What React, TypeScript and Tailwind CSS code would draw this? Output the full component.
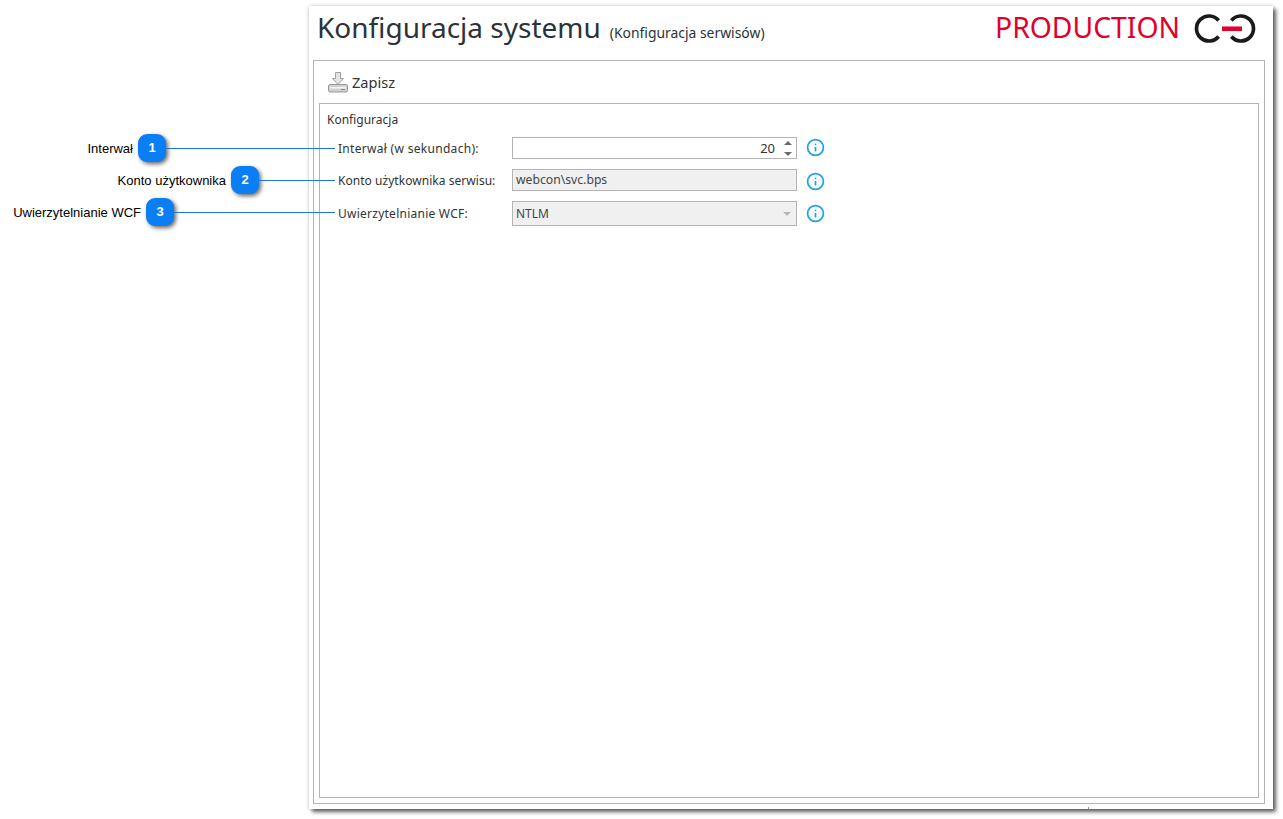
import { Info } from 'lucide-react'

const UI_FONT = "font-['Noto_Sans',sans-serif]"

// ---------------------------------------------------------------------------
// Callouts left of the window
// ---------------------------------------------------------------------------

const CALLOUTS = [
  { n: 1, label: 'Interwał', line: 'w-[169px]' },
  { n: 2, label: 'Konto użytkownika', line: 'w-[76px]' },
  { n: 3, label: 'Uwierzytelnianie WCF', line: 'w-[161px]' },
]

function Callouts() {
  return (
    <div className="absolute left-0 top-[134px] w-[335px] flex flex-col gap-[4px] font-['Liberation_Sans',sans-serif]">
      {CALLOUTS.map((c) => (
        <div key={c.n} className="h-[28px] flex items-center justify-end">
          <span className="text-[13px] text-black mr-[5px] pt-[1px]">{c.label}</span>
          <span className="w-[28px] h-[28px] shrink-0 rounded-[9px] bg-[#0a7ff5] text-white text-[13px] font-bold flex items-center justify-center shadow-[2px_2px_4px_rgba(0,0,0,0.6)]">
            {c.n}
          </span>
          <span className={`${c.line} h-px bg-[#1a78d8]`} />
        </div>
      ))}
    </div>
  )
}

// ---------------------------------------------------------------------------
// Icons
// ---------------------------------------------------------------------------

function Logo() {
  return (
    <svg width="66" height="31" viewBox="0 0 66 31" fill="none">
      <path d="M26.6 7.500A12.500 12.500 0 1 0 26.600 23.500" stroke="#1a1a1a" strokeWidth="3.7" />
      <path d="M39.400 7.500A12.500 12.500 0 1 1 39.400 23.500" stroke="#1a1a1a" strokeWidth="3.7" />
      <rect x="30" y="13.500" width="20" height="4.500" fill="#e4002b" />
    </svg>
  )
}

function SaveIcon() {
  return (
    <svg width="20" height="21" viewBox="0 0 20 21" fill="none">
      <path d="M7.5 .5h5v6h3l-5.5 6-5.500-6h3z" fill="#e4e4e4" stroke="#a0a0a0" />
      <rect x=".5" y="12.500" width="19" height="7.500" rx="1.500" fill="#d0d0d0" stroke="#999999" />
      <rect x="2" y="15" width="16" height="1.500" fill="#f4f4f4" />
      <rect x="13" y="17" width="4" height="1" fill="#8a8a8a" />
    </svg>
  )
}

function Spinner() {
  return (
    <div className="flex flex-col gap-[7px] mr-[4px]">
      <span className="w-0 h-0 border-x-[4px] border-x-transparent border-b-[4px] border-b-[#6a6a6a]" />
      <span className="w-0 h-0 border-x-[4px] border-x-transparent border-t-[4px] border-t-[#6a6a6a]" />
    </div>
  )
}

// ---------------------------------------------------------------------------
// Form rows
// ---------------------------------------------------------------------------

type RowProps = {
  label: string
  labelClass: string
  iconClass: string
  h: string
  mb: string
  children: React.ReactNode
}

function Row({ label, labelClass, iconClass, h, mb, children }: RowProps) {
  return (
    <div className={`flex items-center ${h} ${mb}`}>
      <label className={`w-[174px] shrink-0 text-[12px] text-[#333333] ${labelClass}`}>{label}</label>
      {children}
      <Info size={19} strokeWidth={2.2} className={`ml-[9px] text-[#1ea0f0] ${iconClass}`} />
    </div>
  )
}

export default function App() {
  return (
    <div className={`relative w-[1283px] h-[819px] overflow-hidden bg-white pl-[309px] pt-[6px] ${UI_FONT}`}>
      <div className="relative w-[964px] h-[803px] flex flex-col bg-white pl-[4px] pr-[8px] pb-[5px] shadow-[0_0_4px_rgba(0,0,0,0.2),3px_3px_4px_rgba(0,0,0,0.6)]">
        {/* Title bar */}
        <header className="h-[54px] shrink-0 flex items-center justify-between pl-[4px] pr-[7px] pb-[10px]">
          <div className="flex items-baseline gap-[9px] text-[#2b3338]">
            <h1 className="text-[28px] leading-none">Konfiguracja systemu</h1>
            <span className="text-[13.9px]">(Konfiguracja serwisów)</span>
          </div>
          <div className="flex items-center gap-[12px]">
            <span className="text-[28.3px] leading-none text-[#e4002b] mb-[1px]">PRODUCTION</span>
            <Logo />
          </div>
        </header>

        {/* Content */}
        <div className="flex-1 min-h-0 flex flex-col border border-[#b4b4b4] px-[5px] pb-[5px]">
          <div className="h-[42px] shrink-0 flex items-center pl-[9px] gap-[4px]">
            <SaveIcon />
            <span className="text-[14.6px] text-[#333333] pt-[2px]">Zapisz</span>
          </div>

          <section className="flex-1 min-h-0 border border-[#b4b4b4] pl-[7px] pt-[7px]">
            <div className="text-[12px] leading-[17px] text-[#333333] mb-[9px]">Konfiguracja</div>
            <div className="pl-[11px]">
              <Row
                label="Interwał (w sekundach):"
                labelClass="tracking-[0.3px] pt-[1px]"
                iconClass="-mt-[2px]"
                h="h-[22px]"
                mb="mb-[10px]"
              >
                <div className="w-[285px] h-full border border-[#b4b4b4] bg-white flex items-center justify-end text-[13px] text-[#333333]">
                  <span className="mr-[9px] pt-[1px]">20</span>
                  <Spinner />
                </div>
              </Row>
              <Row
                label="Konto użytkownika serwisu:"
                labelClass="tracking-[0.04px] pt-[1px]"
                iconClass="mt-[2px]"
                h="h-[22px]"
                mb="mb-[10px]"
              >
                <div className="w-[285px] h-full border border-[#b4b4b4] bg-[#f0f0f0] flex items-center pl-[3px] pt-[1px] text-[12.2px] text-[#444444]">
                  webcon\svc.bps
                </div>
              </Row>
              <Row
                label="Uwierzytelnianie WCF:"
                labelClass="tracking-[0.25px]"
                iconClass="-mt-[1px]"
                h="h-[25px]"
                mb="mb-0"
              >
                <div className="w-[285px] h-full border border-[#b4b4b4] bg-[#f0f0f0] flex items-center justify-between pl-[3px] pr-[5px] text-[12px] text-[#444444]">
                  NTLM
                  <span className="w-0 h-0 border-x-[4px] border-x-transparent border-t-[4px] border-t-[#b8b8b8]" />
                </div>
              </Row>
            </div>
          </section>
        </div>
        <span className="absolute left-[779px] bottom-0 w-px h-[2px] bg-[#9a9a9a]" />
      </div>

      <Callouts />
    </div>
  )
}
